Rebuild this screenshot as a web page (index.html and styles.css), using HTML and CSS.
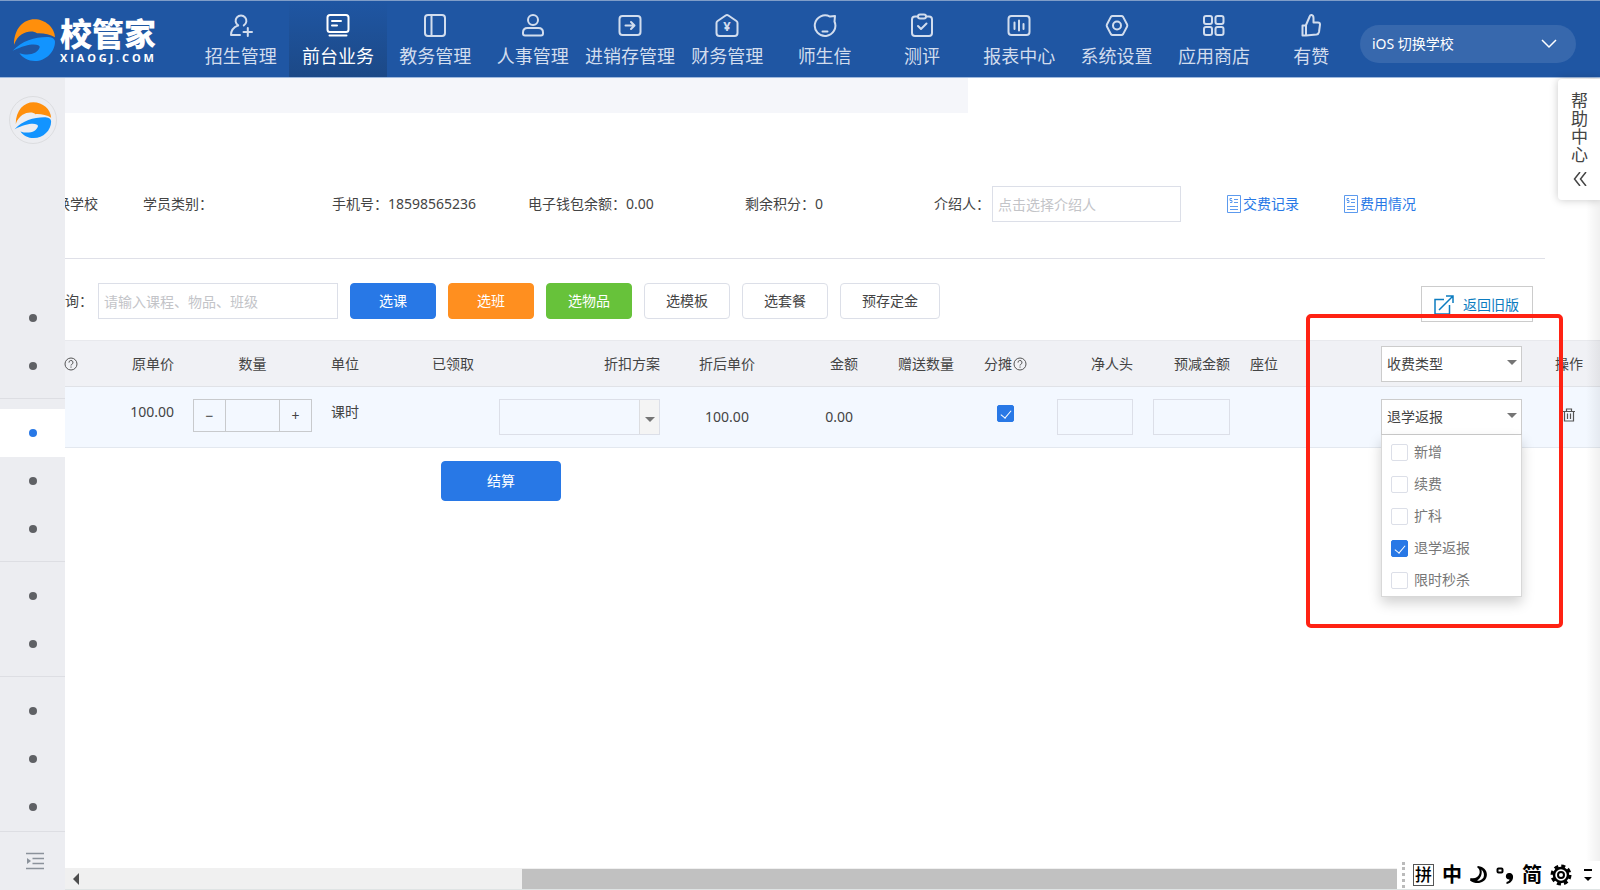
FILE: index.html
```html
<!DOCTYPE html>
<html lang="zh-CN">
<head>
    <meta charset="utf-8">
    <title>校管家 - 前台业务</title>
    <link rel="stylesheet" href="styles.css">
</head>
<body>

<svg class="symbols" aria-hidden="true">
    <symbol id="swirl" viewBox="0 0 130 130">
        <path fill="#ff8f0c" d="M6 79C6 30 35 4 66 4c32 0 60 24 61 53-15-9-35-13-53-12C60 34 20 38 6 79z"/>
        <path fill="#1294ff" d="M2 97c28-31 68-42 106-41 12 1 19 6 19 14 0 30-27 57-59 57-20 0-38-11-46-23 28 10 56 0 60-18 0-10-32-14-80 11z"/>
    </symbol>
    <symbol id="bill" viewBox="0 0 16 18">
        <path fill="none" stroke="#5c9aee" d="M1.500 .5h13v17h-13zM8 4.500h4M8 7.500h4M4 11.500h8M4 14.500h8M6 3.500H4v2h2v2H4"/>
    </symbol>
    <symbol id="help" viewBox="0 0 14 14">
        <circle cx="7" cy="7" r="6" fill="none" stroke="#555"/>
        <path fill="none" stroke="#555" d="M5 5.600a2 2 0 1 1 2.800 1.700c-.6.300-.8.600-.8 1.200M7 9.500v1.200"/>
    </symbol>
</svg>

<div class="header">
    <a class="logo" href="#">
        <svg class="logoMark"><use href="#swirl"/></svg>
        <span class="logoText">
            <strong>校管家</strong>
            <small>X I A O G J . C O M</small>
        </span>
    </a>
    <nav class="nav">
        <a href="#">
            <svg viewBox="0 0 24 24"><path d="M9.200 12.400a5.400 5.400 0 1 1 5.600 0M9.200 12.400C5 14 2 17.500 2 22h9M14.500 19h8.500M18.800 15v8"/></svg>
            <span>招生管理</span>
        </a>
        <a class="active" href="#">
            <svg viewBox="0 0 24 24"><rect x="1.500" y="2" width="21" height="17" rx="2.500"/><path d="M6 8h9M6 12.500h5M3.500 22.500h17"/></svg>
            <span>前台业务</span>
        </a>
        <a href="#">
            <svg viewBox="0 0 24 24"><rect x="2" y="2" width="20" height="21" rx="3"/><path d="M8.500 2v21"/></svg>
            <span>教务管理</span>
        </a>
        <a href="#">
            <svg viewBox="0 0 24 24"><circle cx="12" cy="7" r="5"/><path d="M6.500 15h11c3 0 4.500 2 4.500 4.500v1c0 1.200-.5 2-2 2H4c-1.500 0-2-.8-2-2v-1c0-2.500 1.500-4.500 4.500-4.500z"/></svg>
            <span>人事管理</span>
        </a>
        <a href="#">
            <svg viewBox="0 0 24 24"><rect x="1.500" y="3" width="21" height="19" rx="3"/><path d="M7.500 12.500h8.500M13 9l3.500 3.500L13 16"/></svg>
            <span>进销存管理</span>
        </a>
        <a href="#">
            <svg viewBox="0 0 24 24"><path d="M10.600 2.500 2.600 8Q1.500 8.800 1.500 10v10q0 3 3 3h15q3 0 3-3V10q0-1.200-1.100-2l-8-5.500Q12 1.500 10.600 2.500z"/><text x="12" y="18">¥</text></svg>
            <span>财务管理</span>
        </a>
        <a href="#">
            <svg viewBox="0 0 24 24"><path d="M17 3.600A10.300 10.300 0 1 0 21.500 8.500L22 3z"/><path d="M9.500 18.500h5"/></svg>
            <span>师生信</span>
        </a>
        <a href="#">
            <svg viewBox="0 0 24 24"><path d="M8 3.500H5q-3 0-3 3V20q0 3 3 3h14q3 0 3-3V6.500q0-3-3-3h-3"/><rect x="8" y="1.500" width="8" height="4" rx="2"/><path d="m8 13 3 3 5.500-5.500"/></svg>
            <span>测评</span>
        </a>
        <a href="#">
            <svg viewBox="0 0 24 24"><rect x="1.500" y="3" width="21" height="19" rx="3"/><path d="M7.500 9.500V16M12 7.500V17.500M16.500 11V16"/></svg>
            <span>报表中心</span>
        </a>
        <a href="#">
            <svg viewBox="0 0 24 24"><path d="M7.500 3h9q1 0 1.600.9l4 7.600q.4 1 0 2l-4 7.600q-.6.900-1.600.900h-9q-1 0-1.600-.9l-4-7.600q-.4-1 0-2l4-7.600Q6.500 3 7.500 3z"/><circle cx="12" cy="12.500" r="4"/></svg>
            <span>系统设置</span>
        </a>
        <a href="#">
            <svg viewBox="0 0 24 24"><rect x="2" y="3" width="8" height="8" rx="2"/><rect x="13.500" y="3" width="8" height="8" rx="2"/><rect x="2" y="14" width="8" height="8" rx="2"/><rect x="13.500" y="14" width="8" height="8" rx="2"/></svg>
            <span>应用商店</span>
        </a>
        <a href="#">
            <svg viewBox="0 0 24 24"><path d="M7 22.500V12l3.500-8q.5-2.300 2-2 2 .4 2 3v4.500H19q2 0 2 2l-1 7.500q-.5 2.200-2.500 2.500L7 22.500H3.500V12.500H7"/></svg>
            <span>有赞</span>
        </a>
    </nav>
    <button class="school" type="button">
        <span>iOS 切换学校</span>
        <svg width="16" height="10" viewBox="0 0 16 10"><path fill="none" stroke="#fff" stroke-width="1.500" d="m1 1 7 7 7-7"/></svg>
    </button>
</div>

<div class="main">
    <div class="sidebar">
        <a class="sideLogo" href="#" aria-label="校管家"><svg><use href="#swirl"/></svg></a>
        <div class="sideMenu">
            <div class="sideGroup"><a href="#"></a><a href="#"></a></div>
            <div class="sideGroup"><a class="current" href="#"></a><a href="#"></a><a href="#"></a></div>
            <div class="sideGroup"><a href="#"></a><a href="#"></a></div>
            <div class="sideGroup"><a href="#"></a><a href="#"></a><a href="#"></a></div>
        </div>
        <button class="sideToggle" type="button" aria-label="展开">
            <svg width="18" height="18" viewBox="0 0 18 18"><path fill="none" stroke="#8b929b" stroke-width="1.500" d="M0 1.500h18M6.500 6.500H18M6.500 11.500H18M0 16.500h18"/><path fill="#8b929b" d="m1 6 4 3-4 3z"/></svg>
        </button>
    </div>

    <div class="content">
        <div class="tabStrip"></div>

        <div class="studentInfo">
            <span class="cut">换学校</span>
            <span>学员类别：</span>
            <span>手机号：18598565236</span>
            <span>电子钱包余额：0.00</span>
            <span>剩余积分：0</span>
            <span class="referrer">
                <label for="referrer">介绍人：</label>
                <input type="text" id="referrer" placeholder="点击选择介绍人">
            </span>
            <a href="#"><svg><use href="#bill"/></svg>交费记录</a>
            <a href="#"><svg><use href="#bill"/></svg>费用情况</a>
        </div>

        <div class="toolbar">
            <div class="tools">
                <label for="keyword">询：</label>
                <input type="text" id="keyword" placeholder="请输入课程、物品、班级">
                <button class="btn blue" type="button">选课</button>
                <button class="btn orange" type="button">选班</button>
                <button class="btn green" type="button">选物品</button>
                <button class="btn" type="button">选模板</button>
                <button class="btn" type="button">选套餐</button>
                <button class="btn" type="button">预存定金</button>
            </div>
            <a class="oldVersion" href="#">
                <svg width="20" height="20" viewBox="0 0 20 20"><path fill="none" stroke="#0c7cc0" stroke-width="1.500" d="M10 4.500H1v14.500h14.500V10M5 15 18.500 1.500M12 1h7v7"/></svg>
                <span>返回旧版</span>
            </a>
        </div>

        <table class="orderTable">
            <colgroup>
                <col class="w20"><col class="w99"><col class="w137"><col class="w101"><col class="w67">
                <col class="w181"><col class="w114"><col class="w84"><col class="w96"><col class="w83">
                <col class="w96"><col class="w97"><col class="w131"><col class="w161"><col class="w68">
            </colgroup>
            <thead>
                <tr>
                    <th class="tip"><svg><use href="#help"/></svg></th>
                    <th class="right">原单价</th>
                    <th class="center">数量</th>
                    <th>单位</th>
                    <th>已领取</th>
                    <th class="right">折扣方案</th>
                    <th class="center">折后单价</th>
                    <th class="right">金额</th>
                    <th class="right">赠送数量</th>
                    <th class="center">分摊<svg><use href="#help"/></svg></th>
                    <th class="right">净人头</th>
                    <th class="right">预减金额</th>
                    <th>座位</th>
                    <th>
                        <div class="selectBox">
                            <select aria-label="收费类型"><option>收费类型</option></select>
                        </div>
                    </th>
                    <th class="action">操作</th>
                </tr>
            </thead>
            <tbody>
                <tr>
                    <td></td>
                    <td class="right top">100.00</td>
                    <td class="top">
                        <div class="stepper">
                            <button type="button">−</button>
                            <input type="text" aria-label="数量">
                            <button type="button">+</button>
                        </div>
                    </td>
                    <td class="top">课时</td>
                    <td></td>
                    <td>
                        <div class="selectBox discount">
                            <select aria-label="折扣方案"><option></option></select>
                        </div>
                    </td>
                    <td class="center">100.00</td>
                    <td class="amount">0.00</td>
                    <td></td>
                    <td class="center top"><input type="checkbox" aria-label="分摊" checked></td>
                    <td><input type="text" aria-label="净人头"></td>
                    <td><input type="text" aria-label="预减金额"></td>
                    <td></td>
                    <td>
                        <div class="selectBox">
                            <select aria-label="收费类型"><option>退学返报</option></select>
                            <div class="typeMenu">
                                <label><input type="checkbox">新增</label>
                                <label><input type="checkbox">续费</label>
                                <label><input type="checkbox">扩科</label>
                                <label><input type="checkbox" checked>退学返报</label>
                                <label><input type="checkbox">限时秒杀</label>
                            </div>
                        </div>
                    </td>
                    <td class="action">
                        <button class="del" type="button" aria-label="删除">
                            <svg width="12" height="14" viewBox="0 0 12 14"><path fill="none" stroke="#555" stroke-width="1.200" d="M0 3.500h12M3.500 3V1h5v2M1.500 4v9h9V4M4.500 5.500V11M7.500 5.500V11"/></svg>
                        </button>
                    </td>
                </tr>
            </tbody>
        </table>

        <div class="settle">
            <button class="btn blue" type="button">结算</button>
        </div>

        <div class="scrollBar"><i class="arrow"></i><i class="thumb"></i></div>
        <div class="edgeShade"></div>
        <div class="helpCenter">
            <span>帮<br>助<br>中<br>心</span>
            <svg width="14" height="14" viewBox="0 0 14 14"><path fill="none" stroke="#444" stroke-width="1.500" d="M7 0 1.500 7 7 14M13 0 7.500 7l5.500 7"/></svg>
        </div>
        <div class="redFrame"></div>
    </div>
</div>

<!-- 输入法状态栏 -->
<div class="ime">
    <i class="grip"></i>
    <b class="boxed">拼</b>
    <b>中</b>
    <svg width="18" height="20" viewBox="0 0 18 20"><path fill="#000" d="M8 1c7 1 10 6 8.500 11C15 17.500 7 20.500 0 15.500l.5-2.500c4 1 8-.5 9-4.500C10 6 9.500 4 7 2z"/><path fill="#fff" d="M11.500 4.500c2.500 2.500 3 5.500 2 8-1.500 2.500-4 3.500-6.500 3C10 14 12.500 10 11.500 4.500z"/></svg>
    <svg width="18" height="20" viewBox="0 0 18 20"><rect x="1.500" y="3.500" width="5" height="4" rx="1" fill="none" stroke="#000" stroke-width="2"/><path fill="#000" d="M13 8c3 0 4.500 2 4 5-.5 3-3 5.500-6.500 6v-2c2-.5 3-1.500 3-2.500-5 0-4.500-6.500-.5-6.500z"/></svg>
    <b>简</b>
    <svg width="22" height="22" viewBox="0 0 22 22"><circle cx="11" cy="11" r="9" fill="none" stroke="#000" stroke-width="3" stroke-dasharray="4 3.070"/><circle cx="11" cy="11" r="7" fill="#fff" stroke="#000" stroke-width="2.500"/><circle cx="11" cy="11" r="3" fill="none" stroke="#000" stroke-width="2"/></svg>
    <svg class="more" width="8" height="14" viewBox="0 0 8 14"><path d="M0 1h8v2H0zM0 9h8l-4 4z"/></svg>
</div>

</body>
</html>
```
FILE: styles.css
```css
* {
	box-sizing: border-box;
}

body {
	margin: 0;
	height: 100vh;
	display: flex;
	flex-direction: column;
	overflow: hidden;
	background: #fff;
	color: #444;
	font-family: "Noto Sans", "Noto Sans CJK SC", sans-serif;
	font-size: 14px;
	line-height: 20px;
}

a {
	text-decoration: none;
}

button,
input,
select {
	font: inherit;
	color: inherit;
}

button {
	padding: 0;
	border: 0;
	background: none;
}

.symbols {
	position: absolute;
	width: 0;
	height: 0;
}

/* 顶部导航 */
.header {
	flex: none;
	display: flex;
	align-items: center;
	height: 78px;
	padding-right: 24px;
	border-top: 1px solid #7f9dc8;
	border-bottom: 1px solid #9fb9dd;
	background: #1f56a3;
}

.logo {
	display: flex;
	align-items: center;
	gap: 4px;
	width: 192px;
	padding: 2px 0 0 12px;
	color: #fff;
}

.logoMark {
	width: 44px;
	height: 44px;
}

.logoText {
	display: flex;
	flex-direction: column;
}

.logoText strong {
	font-size: 32px;
	line-height: 36px;
	font-weight: 900;
}

.logoText small {
	font-family: "Open Sans", sans-serif;
	font-size: 11px;
	line-height: 12px;
	font-weight: 700;
	white-space: nowrap;
}

.nav {
	flex: 1;
	display: flex;
	align-self: stretch;
}

.nav a {
	flex: 1 0 0;
	display: flex;
	flex-direction: column;
	align-items: center;
	gap: 6px;
	padding-top: 12px;
	color: #d2ddee;
	font-size: 18px;
	line-height: 26px;
	white-space: nowrap;
}

.nav a.active {
	color: #fff;
	background: linear-gradient(#1f56a3, #1c4987);
}

.nav svg {
	width: 24px;
	height: 24px;
	fill: none;
	stroke: currentColor;
	stroke-width: 2;
	stroke-linejoin: round;
	stroke-linecap: round;
}

.nav text {
	fill: currentColor;
	stroke: none;
	font-size: 13px;
	font-weight: 700;
	text-anchor: middle;
}

.school {
	display: flex;
	align-items: center;
	justify-content: space-between;
	width: 216px;
	height: 38px;
	margin-top: 10px;
	padding: 0 19px 0 12px;
	border-radius: 19px;
	background: #3768ad;
	color: #fff;
}

.main {
	flex: 1;
	display: flex;
	min-height: 0;
}

/* 左侧菜单 */
.sidebar {
	flex: none;
	display: flex;
	flex-direction: column;
	width: 65px;
	background: #ecedf1;
}

.sideLogo {
	display: flex;
	align-items: center;
	justify-content: center;
	width: 48px;
	height: 48px;
	margin: 18px auto 0;
	border: 1px solid #dcdde0;
	border-radius: 50%;
}

.sideLogo svg {
	width: 38px;
	height: 38px;
}

.sideMenu {
	margin-top: auto;
}

.sideGroup {
	padding: 10px 0 8px;
	border-bottom: 1px solid #dddee3;
}

.sideGroup:last-child {
	padding-bottom: 0;
}

.sideGroup a {
	display: flex;
	align-items: center;
	justify-content: center;
	height: 48px;
	padding-left: 1px;
}

.sideGroup a::before {
	content: "";
	width: 8px;
	height: 8px;
	border-radius: 50%;
	background: #5f6165;
}

.sideGroup .current {
	background: #fff;
}

.sideGroup .current::before {
	background: #2878e6;
}

.sideToggle {
	height: 58px;
	padding-left: 5px;
}

.sideToggle svg {
	display: block;
	margin: 0 auto;
}

/* 内容区 */
.content {
	position: relative;
	flex: 1;
	display: flex;
	flex-direction: column;
	min-width: 0;
}

.tabStrip {
	width: 903px;
	max-width: 100%;
	height: 35px;
	background: #f5f6fa;
}

input[type=text] {
	height: 36px;
	padding: 0 5px;
	border: 1px solid #dcdfe8;
	background: transparent;
}

input::placeholder {
	color: #c3c4c8;
	opacity: 1;
}

.studentInfo {
	display: grid;
	grid-template-columns: 78fr 189fr 196fr 217fr 189fr 292fr 117fr 202fr;
	align-items: center;
	margin-right: 55px;
	padding: 73px 0 36px;
	border-bottom: 1px solid #dfe0e8;
	white-space: nowrap;
}

.cut {
	display: flex;
	justify-content: flex-end;
	width: 33px;
	overflow: hidden;
}

.referrer {
	display: flex;
	align-items: center;
	gap: 2px;
}

.referrer input {
	width: 189px;
}

.studentInfo a {
	display: flex;
	align-items: center;
	gap: 1px;
	color: #2878e6;
}

.studentInfo a svg {
	width: 16px;
	height: 18px;
}

.toolbar {
	display: flex;
	justify-content: space-between;
	margin-right: 67px;
	padding: 24px 0 18px;
}

.tools {
	display: flex;
	align-items: center;
	height: 36px;
	margin-bottom: 3px;
	gap: 12px;
}

.tools label {
	width: 21px;
	white-space: nowrap;
}

.tools input {
	width: 240px;
}

.btn {
	min-width: 86px;
	height: 36px;
	padding: 0 21px;
	border: 1px solid #dcdfe8;
	border-radius: 4px;
	background: #fff;
}

.blue {
	border-color: #2878e6;
	background: #2878e6;
	color: #fff;
}

.orange {
	border-color: #ff8f1f;
	background: #ff8f1f;
	color: #fff;
}

.green {
	border-color: #67c23a;
	background: #67c23a;
	color: #fff;
}

.oldVersion {
	align-self: flex-end;
	display: flex;
	align-items: center;
	gap: 9px;
	height: 36px;
	padding: 2px 13px 0 12px;
	border: 1px solid #ccc;
	color: #0c7cc0;
}

/* 收费明细 */
.orderTable {
	width: 100%;
	table-layout: fixed;
	border-collapse: separate;
	border-spacing: 0;
	border-right: 1px solid #dfe3ea;
}

.w20 { width: 20px; }
.w67 { width: 67px; }
.w68 { width: 68px; }
.w83 { width: 83px; }
.w84 { width: 84px; }
.w96 { width: 96px; }
.w97 { width: 97px; }
.w99 { width: 99px; }
.w101 { width: 101px; }
.w114 { width: 114px; }
.w131 { width: 131px; }
.w137 { width: 137px; }
.w161 { width: 161px; }
.w181 { width: 181px; }

.orderTable th,
.orderTable td {
	padding: 0 10px;
	text-align: left;
	font-weight: 400;
	white-space: nowrap;
}

.orderTable th {
	height: 47px;
	border-top: 1px solid #e8e9ed;
	border-bottom: 1px solid #e0e2e7;
	background: #f0f1f5;
}

.orderTable td {
	height: 61px;
	border-bottom: 1px solid #e3e8ef;
	background: #f3f8ff;
}

.orderTable th svg {
	width: 14px;
	height: 14px;
	margin-left: 1px;
	vertical-align: -2px;
}

.orderTable .tip {
	padding: 0;
}

.orderTable .tip svg {
	margin-left: -1px;
}

.orderTable .right {
	text-align: right;
}

.orderTable .amount {
	padding-right: 15px;
	text-align: right;
}

.orderTable .center {
	text-align: center;
}

.orderTable .action {
	padding: 0 10px 0 16px;
	text-align: center;
}

.orderTable .top {
	padding-top: 12px;
	vertical-align: top;
	line-height: 26px;
}

.orderTable input[type=text] {
	display: block;
	width: 100%;
}

.stepper {
	display: flex;
	height: 33px;
	margin: 0 -1px;
	border: 1px solid #c8cacd;
}

.stepper button {
	flex: none;
	width: 31px;
	line-height: 30px;
}

.orderTable .stepper input {
	flex: 1;
	min-width: 0;
	height: auto;
	border: solid #c8cacd;
	border-width: 0 1px;
}

.selectBox {
	position: relative;
}

.selectBox select {
	display: block;
	width: 100%;
	height: 36px;
	padding: 0 5px;
	border: 1px solid #ccc;
	border-radius: 0;
	background: #fff;
	appearance: none;
}

.selectBox::after {
	content: "";
	position: absolute;
	top: 14px;
	right: 5px;
	border: 5px solid transparent;
	border-top-color: #757575;
	border-bottom: 0;
	pointer-events: none;
}

.selectBox.discount select {
	border-color: #dcdfe8;
	background: linear-gradient(to left, #f4f4f4 19px, #dcdde0 19px, #dcdde0 20px, transparent 20px);
}

.selectBox.discount::after {
	top: 18px;
}

input[type=checkbox] {
	position: relative;
	width: 17px;
	height: 17px;
	margin: 0;
	border: 1px solid #dcdfe8;
	border-radius: 2px;
	background: #fff;
	vertical-align: middle;
	appearance: none;
}

input[type=checkbox]:checked {
	border-color: #2878e6;
	background: #2878e6;
}

input[type=checkbox]:checked::after {
	content: "";
	position: absolute;
	left: 5px;
	top: 2px;
	width: 5px;
	height: 9px;
	border: solid #fff;
	border-width: 0 1px 1px 0;
	transform: rotate(40deg);
}

.typeMenu {
	position: absolute;
	top: 100%;
	left: 0;
	right: 0;
	padding-top: 1px;
	border: 1px solid #d8d8d8;
	border-top: 0;
	background: #fff;
	box-shadow: 0 6px 12px rgba(0, 0, 0, .18);
	color: #777;
}

.typeMenu label {
	display: flex;
	align-items: center;
	gap: 6px;
	height: 32px;
	padding-left: 9px;
}

.del svg {
	display: block;
}

.settle {
	padding: 13px 0 0 376px;
}

.settle .btn {
	width: 120px;
	height: 40px;
}

.scrollBar {
	display: flex;
	align-items: center;
	height: 22px;
	margin-top: auto;
	padding-left: 8px;
	border-bottom: 1px solid #dfe4e4;
	background: #f0f0f0;
}

.arrow {
	border: 6px solid transparent;
	border-right-color: #4d4d4d;
	border-left: 0;
}

.thumb {
	width: 60%;
	height: 20px;
	margin-left: 443px;
	background: #c1c1c1;
}

.edgeShade {
	position: absolute;
	top: 0;
	right: 0;
	bottom: 22px;
	width: 14px;
	background: linear-gradient(to left, rgba(0, 0, 0, .06), transparent);
	pointer-events: none;
}

.helpCenter {
	position: absolute;
	top: 1px;
	right: 0;
	display: flex;
	flex-direction: column;
	align-items: center;
	gap: 8px;
	width: 42px;
	padding: 13px 0 14px 1px;
	border-radius: 4px 0 0 4px;
	background: #fff;
	box-shadow: 0 0 8px rgba(0, 0, 0, .22);
	font-size: 17px;
	line-height: 18px;
}

/* 标注框 */
.redFrame {
	position: absolute;
	top: 236px;
	right: 37px;
	width: 257px;
	height: 314px;
	border: 4px solid #ff2213;
	border-radius: 5px;
	pointer-events: none;
}

.ime {
	position: absolute;
	right: 0;
	bottom: 1px;
	display: flex;
	align-items: center;
	gap: 8px;
	height: 28px;
	padding: 0 8px 0 5px;
	background: #fff;
	color: #000;
}

.ime b {
	font-size: 20px;
	line-height: 20px;
}

.ime .boxed {
	padding: 0 1px;
	border: 1px solid #555;
	font-size: 17px;
	font-weight: 500;
}

.ime .more {
	margin-left: 4px;
}

.grip {
	height: 26px;
	border-left: 3px dotted #bbb;
}
```
